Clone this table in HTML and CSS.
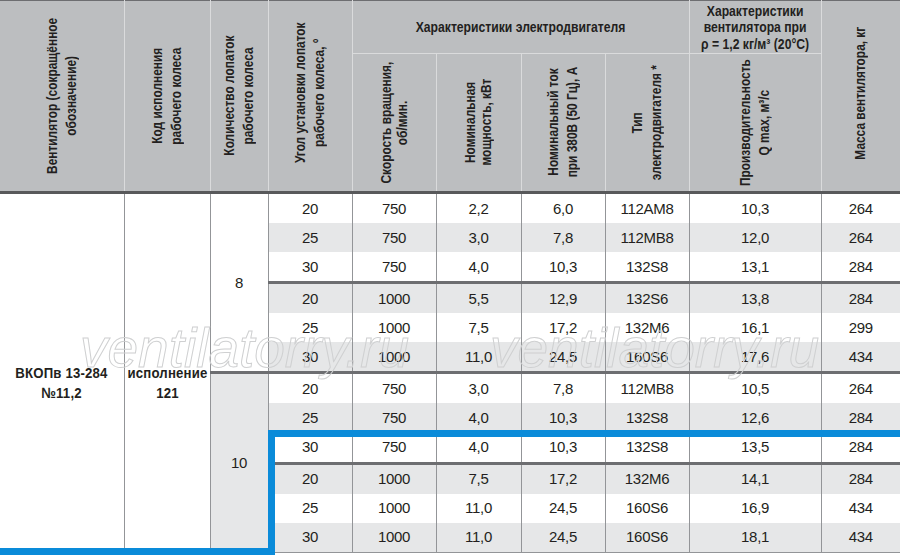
FILE: index.html
```html
<!DOCTYPE html>
<html lang="ru">
<head>
<meta charset="utf-8">
<title>ВКОПв 13-284 №11,2</title>
<link rel="stylesheet" href="styles.css">
</head>
<body>
<div class="sheet">
  <table class="spec">
    <colgroup>
      <col class="w124"><col class="w86"><col class="w58"><col class="w84"><col class="w84"><col class="w85"><col class="w84"><col class="w84"><col class="w132"><col class="w79">
    </colgroup>
    <thead>
      <tr class="hrow1">
        <th rowspan="2"><div class="vbox tall"><span class="vt">Вентилятор (сокращённое<br>обозначение)</span></div></th>
        <th rowspan="2"><div class="vbox tall"><span class="vt">Код исполнения<br>рабочего колеса</span></div></th>
        <th rowspan="2"><div class="vbox tall"><span class="vt">Количество лопаток<br>рабочего колеса</span></div></th>
        <th rowspan="2"><div class="vbox tall up"><span class="vt">Угол установки лопаток<br>рабочего колеса, °</span></div></th>
        <th colspan="4"><div class="hbox"><span class="hz">Характеристики электродвигателя</span></div></th>
        <th><div class="hbox"><span class="hz lines">Характеристики<br>вентилятора при<br>ρ = 1,2 кг/м³ (20°С)</span></div></th>
        <th rowspan="2"><div class="vbox tall up"><span class="vt">Масса вентилятора, кг</span></div></th>
      </tr>
      <tr class="hrow2">
        <th><div class="vbox"><span class="vt tight">Скорость вращения,<br>об/мин.</span></div></th>
        <th><div class="vbox"><span class="vt tight">Номинальная<br>мощность, кВт</span></div></th>
        <th><div class="vbox"><span class="vt">Номинальный ток<br>при 380В (50 Гц), А</span></div></th>
        <th><div class="vbox"><span class="vt">Тип<br>электродвигателя *</span></div></th>
        <th><div class="vbox"><span class="vt">Производительность<br>Q max, м³/с</span></div></th>
      </tr>
    </thead>
    <tbody>
      <tr>
        <td rowspan="12" class="name"><div class="hbox"><span class="bold">ВКОПв 13-284<br>№11,2</span></div></td>
        <td rowspan="12" class="name"><div class="hbox"><span class="bold">исполнение<br>121</span></div></td>
        <td rowspan="6" class="blades">8</td>
        <td>20</td><td>750</td><td>2,2</td><td>6,0</td><td>112AM8</td><td>10,3</td><td>264</td>
      </tr>
      <tr class="alt"><td>25</td><td>750</td><td>3,0</td><td>7,8</td><td>112MB8</td><td>12,0</td><td>264</td></tr>
      <tr><td>30</td><td>750</td><td>4,0</td><td>10,3</td><td>132S8</td><td>13,1</td><td>284</td></tr>
      <tr class="alt sep"><td>20</td><td>1000</td><td>5,5</td><td>12,9</td><td>132S6</td><td>13,8</td><td>284</td></tr>
      <tr><td>25</td><td>1000</td><td>7,5</td><td>17,2</td><td>132M6</td><td>16,1</td><td>299</td></tr>
      <tr class="alt"><td>30</td><td>1000</td><td>11,0</td><td>24,5</td><td>160S6</td><td>17,6</td><td>434</td></tr>
      <tr class="sep">
        <td rowspan="6" class="blades shaded">10</td>
        <td>20</td><td>750</td><td>3,0</td><td>7,8</td><td>112MB8</td><td>10,5</td><td>264</td>
      </tr>
      <tr class="alt"><td>25</td><td>750</td><td>4,0</td><td>10,3</td><td>132S8</td><td>12,6</td><td>284</td></tr>
      <tr><td>30</td><td>750</td><td>4,0</td><td>10,3</td><td>132S8</td><td>13,5</td><td>284</td></tr>
      <tr class="alt sep"><td>20</td><td>1000</td><td>7,5</td><td>17,2</td><td>132M6</td><td>14,1</td><td>284</td></tr>
      <tr><td>25</td><td>1000</td><td>11,0</td><td>24,5</td><td>160S6</td><td>16,9</td><td>434</td></tr>
      <tr class="alt last"><td>30</td><td>1000</td><td>11,0</td><td>24,5</td><td>160S6</td><td>18,1</td><td>434</td></tr>
    </tbody>
  </table>

  <span class="mark mark-a">ventilatorry.ru</span>
  <span class="mark mark-b">ventilatorry.ru</span>

  <div class="hl hl-top"></div>
  <div class="hl hl-side"></div>
  <div class="hl hl-bottom"></div>
</div>
</body>
</html>
```

FILE: styles.css
```css
html, body {
  margin: 0;
  padding: 0;
  background: #ffffff;
}

.sheet {
  position: relative;
  width: 900px;
  height: 555px;
  overflow: hidden;
  font-family: "Liberation Sans", Arial, sans-serif;
  color: #231f20;
}

.spec {
  width: 900px;
  table-layout: fixed;
  border-collapse: collapse;
  border-spacing: 0;
}

.w124 { width: 124px; }
.w86 { width: 86px; }
.w58 { width: 58px; }
.w84 { width: 84px; }
.w85 { width: 85px; }
.w132 { width: 132px; }
.w79 { width: 79px; }

/* header */
.spec th {
  background: #bcbec0;
  border: 1px solid #dadbdc;
  padding: 0;
  font-weight: bold;
  font-size: 14px;
  text-align: center;
  vertical-align: middle;
  color: #231f20;
  overflow: visible;
}

.spec thead tr:first-child th {
  border-top: 1px solid #6d6e71;
}

.spec th:first-child {
  border-left: 0;
}

.spec th:last-child {
  border-right: 0;
}

.hrow1 {
  height: 53px;
}

.hrow2 {
  height: 139px;
}

.spec .hrow2 th,
.spec .hrow1 th[rowspan] {
  border-bottom: 3px solid #58595b;
}

.hbox {
  display: flex;
  justify-content: center;
  align-items: center;
}

.hz {
  display: inline-block;
  white-space: nowrap;
  transform: scaleX(0.87);
  line-height: 16.5px;
}

.hz.lines {
  padding-top: 1px;
}

.vbox {
  height: 128px;
  display: flex;
  justify-content: center;
  align-items: center;
}

.vbox.tall {
  height: 180px;
}

.vbox.tall.up {
  margin-top: -6px;
}

.vt {
  display: block;
  writing-mode: vertical-rl;
  transform: rotate(180deg) scaleY(0.85);
  text-align: center;
  line-height: 19px;
  white-space: nowrap;
}

.vt.tight {
  line-height: 15.5px;
}

/* body */
.spec td {
  padding: 0;
  height: 29.07px;
  border-left: 1px solid #939598;
  border-right: 1px solid #939598;
  border-top: 0;
  border-bottom: 0;
  text-align: center;
  vertical-align: middle;
  font-size: 15px;
  letter-spacing: -0.3px;
  line-height: 18px;
  background: #ffffff;
}

.spec td:first-child {
  border-left: 0;
}

.spec tr td:last-child {
  border-right: 0;
}

.spec tr.alt td {
  background: #e6e7e8;
}

.spec tr.alt td.name {
  background: #ffffff;
}

.spec tr.sep td {
  border-top: 3px solid #6d6e71;
}

.spec tr.last td {
  border-bottom: 1px solid #939598;
}

.spec td.name {
  padding-top: 19px;
}

.bold {
  display: inline-block;
  white-space: nowrap;
  font-weight: bold;
  font-size: 15px;
  line-height: 20px;
  letter-spacing: 0.2px;
  transform: scaleX(0.88);
}

.spec td.blades {
  background: #ffffff;
}

.spec tr td.blades.shaded {
  background: #e6e7e8;
}

/* watermark */
.mark {
  position: absolute;
  top: 318px;
  font-family: "Liberation Sans", sans-serif;
  font-style: italic;
  font-size: 55px;
  line-height: 60px;
  color: transparent;
  -webkit-text-stroke: 1px #cfd0d1;
  white-space: nowrap;
  pointer-events: none;
}

.mark-a { left: 80px; }
.mark-b { left: 490px; }

/* blue highlight outline */
.hl {
  position: absolute;
  background: #0a8bd9;
}

.hl-top {
  left: 268px;
  top: 430px;
  right: 0;
  height: 7px;
}

.hl-side {
  left: 268px;
  top: 430px;
  width: 7px;
  bottom: 0;
}

.hl-bottom {
  left: 0;
  bottom: 0;
  width: 275px;
  height: 7px;
}
```
